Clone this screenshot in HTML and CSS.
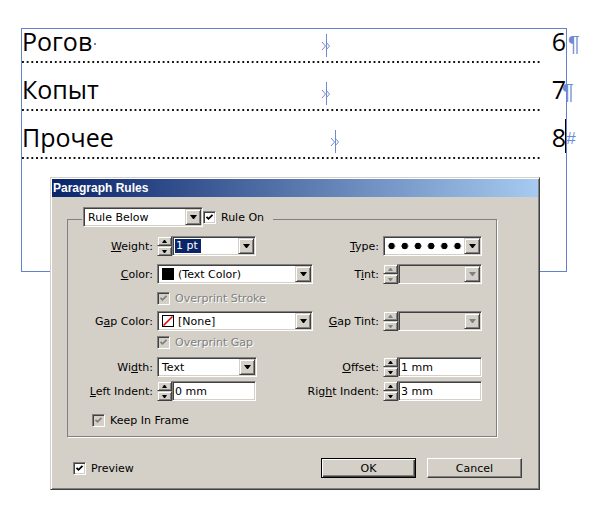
FILE: index.html
```html
<!DOCTYPE html>
<html lang="ru">
<head>
  <meta charset="UTF-8">
  <meta name="viewport" content="width=device-width, initial-scale=1.0">
  <title>Paragraph Rules</title>
  <link rel="stylesheet" href="styles.css">
</head>
<body>
  <div class="frame">
    <div class="para first">
      <div class="line">
        <span class="word">Рогов<span class="space-mark"></span></span>
        <svg class="tab-mark" width="10" height="23" viewBox="0 0 10 23"><path d="M5.5 0v23M1 8l3.5 4-3.5 4M5 8l3.5 4-3.5 4"/></svg>
        <span class="end">6<span class="pil">¶</span></span>
      </div>
      <div class="rule"></div>
    </div>
    <div class="para">
      <div class="line">
        <span class="word">Копыт</span>
        <svg class="tab-mark" width="10" height="23" viewBox="0 0 10 23"><path d="M5.5 0v23M1 8l3.5 4-3.5 4M5 8l3.5 4-3.5 4"/></svg>
        <span class="end">7<span class="pil tucked">¶</span></span>
      </div>
      <div class="rule"></div>
    </div>
    <div class="para">
      <div class="line">
        <span class="word">Прочее</span>
        <svg class="tab-mark shifted" width="10" height="23" viewBox="0 0 10 23"><path d="M5.5 0v23M1 8l3.5 4-3.5 4M5 8l3.5 4-3.5 4"/></svg>
        <span class="end">8<span class="caret"></span><span class="story-end">#</span></span>
      </div>
      <div class="rule"></div>
    </div>
  </div>

  <div class="dialog">
    <div class="titlebar">Paragraph Rules</div>

    <fieldset class="group">
      <legend>
        <span class="box select legend-select"><span class="value">Rule Below</span><span class="drop"></span></span>
        <span class="check"><svg viewBox="0 0 9 9"><path d="M1.5 3.8l2 2 4-4"/></svg></span>Rule On
      </legend>

      <div class="rows">
        <div class="row">
          <div class="field">
            <label class="label"><u>W</u>eight:</label>
            <span class="spin"><span class="up"></span><span class="down"></span></span>
            <span class="box combo"><span class="value"><span class="selected">1 pt</span></span><span class="drop"></span></span>
          </div>
          <div class="field right">
            <label class="label"><u>T</u>ype:</label>
            <span class="box select type"><span class="value"><span class="dots"></span></span><span class="drop"></span></span>
          </div>
        </div>

        <div class="row">
          <div class="field">
            <label class="label"><u>C</u>olor:</label>
            <span class="box select wide"><span class="value"><span class="swatch black"></span>(Text Color)</span><span class="drop"></span></span>
          </div>
          <div class="field right">
            <label class="label">T<u>i</u>nt:</label>
            <span class="spin off"><span class="up"></span><span class="down"></span></span>
            <span class="box combo off"><span class="value"></span><span class="drop"></span></span>
          </div>
        </div>

        <div class="row sub stroke">
          <span class="check off"><svg viewBox="0 0 9 9"><path d="M1.5 3.8l2 2 4-4"/></svg></span>
          <span class="dim">Overprint Stroke</span>
        </div>

        <div class="row after-stroke">
          <div class="field">
            <label class="label">G<u>a</u>p Color:</label>
            <span class="box select wide"><span class="value"><svg class="swatch" viewBox="0 0 12 12"><rect x="0.5" y="0.5" width="11" height="11" fill="#fff" stroke="#000"/><path d="M1.5 10.5l9-9" stroke="#e00" stroke-width="1.6"/></svg>[None]</span><span class="drop"></span></span>
          </div>
          <div class="field right">
            <label class="label"><u>G</u>ap Tint:</label>
            <span class="spin off"><span class="up"></span><span class="down"></span></span>
            <span class="box combo off"><span class="value"></span><span class="drop"></span></span>
          </div>
        </div>

        <div class="row sub">
          <span class="check off"><svg viewBox="0 0 9 9"><path d="M1.5 3.8l2 2 4-4"/></svg></span>
          <span class="dim">Overprint Gap</span>
        </div>

        <div class="row">
          <div class="field">
            <label class="label">Wi<u>d</u>th:</label>
            <span class="box select mid"><span class="value">Text</span><span class="drop"></span></span>
          </div>
          <div class="field right">
            <label class="label"><u>O</u>ffset:</label>
            <span class="spin"><span class="up"></span><span class="down"></span></span>
            <span class="box input"><span class="value">1 mm</span></span>
          </div>
        </div>

        <div class="row tight">
          <div class="field">
            <label class="label"><u>L</u>eft Indent:</label>
            <span class="spin"><span class="up"></span><span class="down"></span></span>
            <span class="box input"><span class="value">0 mm</span></span>
          </div>
          <div class="field right">
            <label class="label">Rig<u>h</u>t Indent:</label>
            <span class="spin"><span class="up"></span><span class="down"></span></span>
            <span class="box input"><span class="value">3 mm</span></span>
          </div>
        </div>

        <div class="row sub keep">
          <span class="check off"><svg viewBox="0 0 9 9"><path d="M1.5 3.8l2 2 4-4"/></svg></span>
          <span>Keep In Frame</span>
        </div>
      </div>
    </fieldset>

    <div class="footer">
      <span class="check"><svg viewBox="0 0 9 9"><path d="M1.5 3.8l2 2 4-4"/></svg></span>
      <span>Preview</span>
      <button class="btn default">OK</button>
      <button class="btn">Cancel</button>
    </div>
  </div>
</body>
</html>
```

FILE: styles.css
```css
body {
  margin: 0;
  position: relative;
  width: 598px;
  height: 507px;
  overflow: hidden;
  background: #fff;
  font-family: "Open Sans", sans-serif;
}

/* text frame */
.frame {
  box-sizing: border-box;
  width: 546px;
  height: 244px;
  margin: 28px 0 0 21px;
  border: 1px solid #6482cc;
}
.para {
  display: flex;
  flex-direction: column;
}
.line {
  box-sizing: border-box;
  height: 46px;
  padding-bottom: 7px;
  display: grid;
  grid-template-columns: 299px 1fr auto;
  align-items: end;
  font-size: 25px;
  line-height: 25px;
  color: #000;
}
.para.first .line {
  height: 32px;
  padding-bottom: 8px;
}
.rule {
  height: 2px;
  margin-right: 24px;
  background: radial-gradient(circle at 1px 1px, #111 0.9px, transparent 1.3px) 0 0 / 4.7px 2px repeat-x;
}
.word {
  white-space: nowrap;
}
.space-mark {
  display: inline-block;
  width: 2px;
  height: 2px;
  margin-left: 2px;
  vertical-align: 6px;
  background: #6482cc;
}
.tab-mark {
  margin-bottom: -3px;
  fill: none;
  stroke: #6f8ad0;
  stroke-width: 1;
}
.tab-mark.shifted {
  margin-left: 9px;
}
.end {
  white-space: nowrap;
}
.pil {
  display: inline-block;
  width: 0;
  margin: 0 -2px 0 2px;
  font: 22px/10px "Liberation Sans", sans-serif;
  color: #6f8ad0;
}
.pil.tucked {
  margin: 0 4px 0 -4px;
}
.caret {
  display: inline-block;
  width: 1px;
  height: 34px;
  margin: -28px 0 -6px -1px;
  background: #000;
}
.story-end {
  display: inline-block;
  width: 0;
  vertical-align: 3px;
  font: italic 17px/10px "Liberation Sans", sans-serif;
  color: #6f8ad0;
}

/* dialog */
.dialog {
  position: absolute;
  left: 50px;
  top: 177px;
  box-sizing: border-box;
  width: 490px;
  height: 313px;
  padding: 1px;
  background: #d4d0c8;
  border: 1px solid;
  border-color: #d4d0c8 #404040 #404040 #d4d0c8;
  box-shadow: inset 1px 1px #fff, inset -1px -1px #808080;
  font: 11px "DejaVu Sans", sans-serif;
  color: #000;
}
.titlebar {
  height: 18px;
  padding-left: 1px;
  background: linear-gradient(90deg, #0a246a, #a6caf0);
  color: #fff;
  font: bold 12px/18px "Liberation Sans", sans-serif;
}
.group {
  min-width: 0;
  margin: 10px 41px 0 15px;
  padding: 5px 14px 9px 0;
  border: 1px solid #808080;
  box-shadow: 1px 1px 0 #fff;
}
.group legend {
  display: flex;
  align-items: center;
  margin-left: 14px;
  padding: 0 9px 4px 1px;
}
.row {
  display: flex;
  align-items: center;
  height: 20px;
  margin-top: 8px;
}
.row:first-child {
  margin-top: 0;
}
.row.sub {
  height: 13px;
  margin-top: 5px;
  padding-left: 89px;
}
.row.stroke {
  margin-top: 8px;
}
.row.after-stroke {
  margin-top: 6px;
}
.row.tight {
  margin-top: 4px;
}
.row.keep {
  margin-top: 13px;
  padding-left: 24px;
}
.field {
  display: flex;
  align-items: center;
}
.field.right {
  margin-left: auto;
}
.label {
  width: 85px;
  margin-right: 4px;
  text-align: right;
  white-space: nowrap;
}
.field.right .label {
  width: auto;
}
.dim {
  color: #808080;
  text-shadow: 1px 1px #fff;
}

/* controls */
.check {
  box-sizing: border-box;
  display: flex;
  flex: none;
  width: 13px;
  height: 13px;
  padding: 1px;
  margin-right: 5px;
  background: #fff;
  border: 1px solid;
  border-color: #808080 #fff #fff #808080;
  box-shadow: inset 1px 1px #404040, inset -1px -1px #d4d0c8;
}
.check svg {
  width: 9px;
  height: 9px;
  fill: none;
  stroke: #000;
  stroke-width: 1.8;
}
.check.off {
  background: #d4d0c8;
}
.check.off svg {
  stroke: #808080;
}
.box {
  box-sizing: border-box;
  display: flex;
  flex: none;
  align-items: center;
  height: 20px;
  padding: 1px;
  background: #fff;
  border: 1px solid;
  border-color: #808080 #fff #fff #808080;
  box-shadow: inset 1px 1px #404040, inset -1px -1px #d4d0c8;
}
.box .value {
  display: flex;
  align-items: center;
  flex: 1;
  min-width: 0;
  padding-left: 3px;
  white-space: nowrap;
  overflow: hidden;
}
.box.off {
  background: #d4d0c8;
}
.legend-select {
  width: 120px;
}
.combo {
  width: 84px;
}
.combo .value {
  padding-left: 1px;
}
.selected {
  padding: 0 3px 0 1px;
  line-height: 14px;
  background: #0a246a;
  color: #fff;
}
.select.wide {
  width: 156px;
}
.select.mid {
  width: 100px;
}
.select.type {
  width: 99px;
}
.type .value {
  padding-left: 0;
}
.dots {
  width: 78px;
  height: 10px;
  background: radial-gradient(circle, #000 3px, transparent 3.6px) 0 50% / 13.2px 10px repeat-x;
}
.input {
  width: 84px;
}
.input .value {
  padding-left: 1px;
}
.swatch {
  flex: none;
  width: 12px;
  height: 12px;
  margin-right: 4px;
}
.swatch.black {
  background: #000;
}
.drop,
.spin span {
  box-sizing: border-box;
  display: flex;
  align-items: center;
  justify-content: center;
  background: #d4d0c8;
  border: 1px solid;
  border-color: #d4d0c8 #404040 #404040 #d4d0c8;
  box-shadow: inset 1px 1px #fff, inset -1px -1px #808080;
}
.drop {
  flex: none;
  width: 16px;
  height: 16px;
  margin-left: auto;
}
.drop::after {
  content: "";
  width: 1px;
  border-style: solid;
  border-width: 4px 3px 0;
  border-color: #000 transparent transparent;
}
.off .drop::after {
  border-top-color: #808080;
}
.spin {
  display: flex;
  flex-direction: column;
  flex: none;
  width: 15px;
  height: 20px;
}
.spin span {
  flex: 1;
}
.spin .up::after {
  content: "";
  width: 1px;
  border-style: solid;
  border-width: 0 2px 3px;
  border-color: transparent transparent #000;
}
.spin .down::after {
  content: "";
  width: 1px;
  border-style: solid;
  border-width: 3px 2px 0;
  border-color: #000 transparent transparent;
}
.spin.off .up::after {
  border-bottom-color: #808080;
}
.spin.off .down::after {
  border-top-color: #808080;
}

/* footer */
.footer {
  display: flex;
  align-items: center;
  margin: 21px 16px 0 21px;
}
.btn {
  box-sizing: border-box;
  width: 95px;
  height: 20px;
  padding: 0;
  background: #d4d0c8;
  border: 1px solid;
  border-color: #fff #404040 #404040 #fff;
  box-shadow: inset -1px -1px #808080;
  font: 11px "DejaVu Sans", sans-serif;
  color: #000;
}
.btn.default {
  margin-left: auto;
  border-color: #000;
  box-shadow: inset 1px 1px #fff, inset -1px -1px #404040, inset -2px -2px #808080;
}
.btn + .btn {
  margin-left: 11px;
}
```
